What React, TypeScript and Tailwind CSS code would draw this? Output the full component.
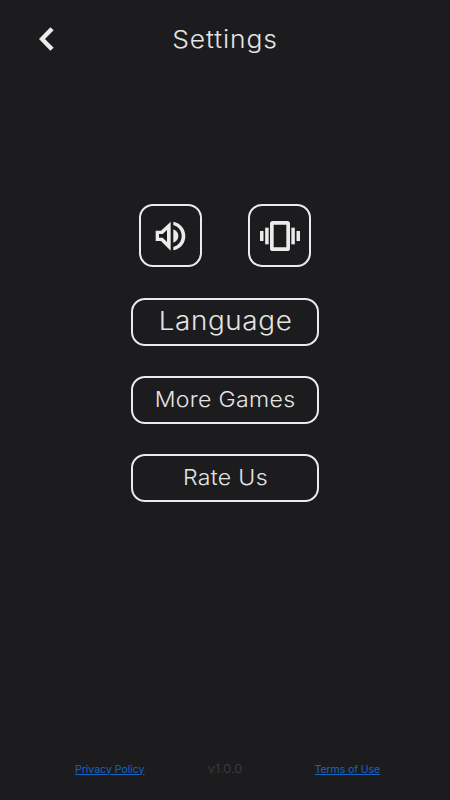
import type { ReactNode } from 'react';

function BackIcon() {
  return (
    <svg className="h-6 w-[15px]" viewBox="0 0 45 72" fill="#ebebeb" aria-hidden="true">
      <path d="M0 36 34 1 44 10 18 36 44 62 34 71Z" />
    </svg>
  );
}

function SoundIcon() {
  return (
    <svg className="h-[30px] w-[31px]" viewBox="0 0 93 90" fill="#ebebeb" aria-hidden="true">
      <path
        fillRule="evenodd"
        d="M2 29H18L47 2V89L18 60H2ZM12 39V50H23L36 63V27L23 39Z"
      />
      <path d="M55 25C65 29 70 36 70 45S65 61 55 65Z" />
      <path d="M55 2C76 6 91 23 91 45S76 84 55 88V78C70 74 80 61 80 45S70 16 55 12Z" />
    </svg>
  );
}

function VibrationIcon() {
  return (
    <svg className="h-[30px] w-10" viewBox="0 0 120 90" fill="#ebebeb" aria-hidden="true">
      <rect x="0" y="30" width="10.5" height="30" />
      <rect x="15.5" y="20" width="10.5" height="50" />
      <rect x="35.5" y="5.5" width="49" height="79" rx="3" fill="none" stroke="#ebebeb" strokeWidth="11" />
      <rect x="94" y="20" width="10.5" height="50" />
      <rect x="109.5" y="30" width="10.5" height="30" />
    </svg>
  );
}

function IconButton({ label, children }: { label: string; children: ReactNode }) {
  return (
    <button
      type="button"
      aria-label={label}
      className="flex h-[63px] w-[63px] items-center justify-center rounded-[14px] border-2 border-[#ebebeb]"
    >
      {children}
    </button>
  );
}

function MenuButton({ className, children }: { className: string; children: ReactNode }) {
  return (
    <button
      type="button"
      className="flex h-12 w-[188px] items-center justify-center rounded-[14px] border-2 border-[#ebebeb] whitespace-nowrap"
    >
      <span className={className}>{children}</span>
    </button>
  );
}

export default function App() {
  return (
    <div className="flex h-screen w-full flex-col bg-[#1c1c1e] font-['Inter','Liberation_Sans',sans-serif] font-light text-[#e4e4e4]">
      <header className="grid h-[78px] grid-cols-[100px_1fr_100px] items-center">
        <button type="button" aria-label="Back" className="ml-[39px] justify-self-start">
          <BackIcon />
        </button>
        <h1 className="scale-x-[1.1] pt-px text-center text-2xl tracking-[0.8px]">Settings</h1>
      </header>

      <main className="flex flex-1 flex-col items-center pt-[126px]">
        <div className="flex gap-[46px]">
          <IconButton label="Sound">
            <SoundIcon />
          </IconButton>
          <IconButton label="Vibration">
            <VibrationIcon />
          </IconButton>
        </div>
        <div className="mt-[31px] flex flex-col gap-[30px]">
          <MenuButton className="scale-x-[1.07] pb-[3px] pl-px text-[26px] tracking-[0.6px]">Language</MenuButton>
          <MenuButton className="scale-x-[1.05] pb-0.5 text-[22px] tracking-[0.3px]">More Games</MenuButton>
          <MenuButton className="scale-x-[1.05] pb-0.5 text-[22px] tracking-[0.3px]">Rate Us</MenuButton>
        </div>
      </main>

      <footer className="grid h-[62px] grid-cols-[1fr_40px_1fr] items-center pr-[70px] pl-[75px] text-[10.5px] whitespace-nowrap">
        <a href="#" className="pt-px font-normal text-[#1565c4] underline">Privacy Policy</a>
        <span className="-ml-[6px] scale-x-[1.07] text-center text-xs text-[#414142]">v1.0.0</span>
        <a href="#" className="justify-self-end pt-px font-normal tracking-[-0.1px] text-[#1565c4] underline">Terms of Use</a>
      </footer>
    </div>
  );
}
